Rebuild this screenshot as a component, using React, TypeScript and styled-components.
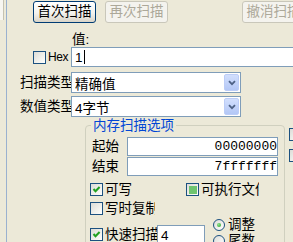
import React from "react";
import styled, { createGlobalStyle } from "styled-components";

const BG = "#ECE9D8";
const FIELD_BORDER = "#7F9DB9";
const CONTROL_BORDER = "#1C5180";

const GlobalStyle = createGlobalStyle`
  html, body {
    margin: 0;
    padding: 0;
    background: ${BG};
    overflow: hidden;
  }
  body {
    font-family: "Liberation Sans", "Noto Sans CJK SC", sans-serif;
    font-size: 13.5px;
    color: #000;
  }
`;

const Window = styled.div`
  display: flex;
  width: 330px;
  height: 242px;
  overflow: hidden;
`;

const LeftRail = styled.div`
  flex: none;
  width: 6px;
`;

const RailTab = styled.div`
  width: 3px;
  height: 20px;
  background: #f7f6f1;
  border-right: 1px solid #c5c2b2;
`;

const Main = styled.div`
  flex: 1;
  display: flex;
  flex-direction: column;
  border-left: 1px solid #9ab1cf;
`;

const ButtonRow = styled.div`
  display: flex;
  margin-top: 1px;
  height: 22px;
`;

const Button = styled.div<{ $left: number; $disabled?: boolean }>`
  flex: none;
  box-sizing: border-box;
  width: 63px;
  height: 22px;
  margin-left: ${p => p.$left}px;
  border: 1px solid ${p => (p.$disabled ? "#C9C7BA" : "#003C74")};
  border-radius: 3px;
  background: ${p =>
    p.$disabled
      ? "#F4F3EE"
      : "linear-gradient(#FFFFFF, #F3F3EE 55%, #D9D4C8)"};
  color: ${p => (p.$disabled ? "#ACA899" : "#000")};
  text-align: center;
  line-height: 20px;
  white-space: nowrap;
`;

const ValueLabel = styled.div`
  margin: 9px 0 0 65px;
  height: 15px;
  line-height: 15px;
`;

const HexRow = styled.div`
  display: flex;
  align-items: center;
  height: 20px;
`;

const HexLabel = styled.span`
  box-sizing: border-box;
  width: 25px;
  padding-left: 2px;
  font-size: 12px;
  letter-spacing: -0.4px;
  line-height: 15px;
`;

const Field = styled.div<{ $width: number; $height?: number; $right?: boolean }>`
  flex: none;
  box-sizing: border-box;
  display: flex;
  align-items: center;
  justify-content: ${p => (p.$right ? "flex-end" : "flex-start")};
  width: ${p => p.$width}px;
  height: ${p => p.$height || 20}px;
  padding: ${p => (p.$right ? "0" : "0 3px")};
  border: 1px solid ${FIELD_BORDER};
  background: #fff;
  white-space: nowrap;
`;

const Caret = styled.span`
  display: inline-block;
  width: 1px;
  height: 14px;
  margin-left: 1px;
  background: #000;
`;

const ComboRow = styled.div<{ $top: number }>`
  display: flex;
  align-items: center;
  margin: ${p => p.$top}px 0 0 13px;
`;

const RowLabel = styled.span`
  flex: none;
  width: 51px;
  overflow: hidden;
  white-space: nowrap;
  line-height: 15px;
`;

const Combo = styled.div`
  flex: none;
  box-sizing: border-box;
  display: flex;
  align-items: center;
  width: 170px;
  height: 21px;
  padding-left: 3px;
  border: 1px solid ${FIELD_BORDER};
  background: #fff;
`;

const ComboText = styled.span`
  flex: 1;
  white-space: nowrap;
`;

const DropButton = styled.span`
  flex: none;
  display: flex;
  align-items: center;
  justify-content: center;
  box-sizing: border-box;
  width: 15px;
  height: 17px;
  margin-right: 1px;
  border: 1px solid #bccdf7;
  border-radius: 2px;
  background: linear-gradient(#d2dffd, #b3c7f6);
`;

const GroupRow = styled.div`
  display: flex;
  margin: 8px 0 0 78px;
`;

const GroupBox = styled.div`
  flex: none;
  box-sizing: border-box;
  display: flex;
  flex-direction: column;
  width: 200px;
  height: 140px;
  border: 1px solid #d0d0bf;
  border-radius: 4px;
`;

const GroupTitle = styled.span`
  align-self: flex-start;
  margin: -8px 0 0 5px;
  padding: 0 2px;
  background: ${BG};
  color: #0046d5;
  line-height: 15px;
`;

const RangeRow = styled.div<{ $top: number }>`
  display: flex;
  align-items: center;
  margin: ${p => p.$top}px 0 0 6px;
`;

const RangeLabel = styled.span`
  width: 35px;
  line-height: 15px;
`;

const HexValue = styled.span`
  font-family: "Liberation Mono", monospace;
  font-size: 13px;
`;

const CheckRow = styled.div<{ $top: number }>`
  display: flex;
  align-items: flex-start;
  margin: ${p => p.$top}px 0 0 4px;
`;

const CheckItem = styled.div<{ $width?: number }>`
  flex: none;
  display: flex;
  align-items: center;
  width: ${p => (p.$width ? `${p.$width}px` : "auto")};
`;

const CheckText = styled.span<{ $width?: number; $top?: number }>`
  flex: none;
  margin: ${p => p.$top || 0}px 0 0 2px;
  width: ${p => (p.$width ? `${p.$width}px` : "auto")};
  overflow: hidden;
  white-space: nowrap;
  line-height: 15px;
`;

const Box = styled.span<{ $top?: number }>`
  flex: none;
  display: inline-flex;
  align-items: center;
  justify-content: center;
  box-sizing: border-box;
  width: 13px;
  height: 13px;
  margin-top: ${p => p.$top || 0}px;
  border: 1px solid ${CONTROL_BORDER};
  background: linear-gradient(135deg, #dcdcd7 0%, #f3f3ef 65%, #ffffff 100%);
`;

const MixedMark = styled.span`
  width: 8px;
  height: 8px;
  background: #6fc56f;
`;

const FieldSpacer = styled.div<{ $top: number }>`
  margin-top: ${p => p.$top}px;
`;

const RadioGroup = styled.div`
  display: flex;
  flex-direction: column;
  gap: 1px;
  margin-left: 8px;
`;

const RadioItem = styled.div`
  display: flex;
  align-items: center;
  height: 15px;
  gap: 3px;
  line-height: 15px;
`;

const Radio = styled.span<{ $on?: boolean }>`
  flex: none;
  display: inline-flex;
  align-items: center;
  justify-content: center;
  box-sizing: border-box;
  width: 12px;
  height: 12px;
  border: 1px solid ${CONTROL_BORDER};
  border-radius: 50%;
  background: linear-gradient(135deg, #dcdcd7, #ffffff);
  &::after {
    content: "";
    display: ${p => (p.$on ? "block" : "none")};
    width: 4px;
    height: 4px;
    border-radius: 50%;
    background: radial-gradient(circle at 35% 35%, #8ee08e, #23a023);
  }
`;

const SideChecks = styled.div`
  display: flex;
  flex-direction: column;
  gap: 8px;
  margin: 3px 0 0 4px;
`;

type CheckState = "on" | "off" | "mixed";

const Checkbox: React.FC<{ state?: CheckState; top?: number }> = ({ state = "off", top }) => (
  <Box $top={top}>
    {state === "on" && (
      <svg width="11" height="11" viewBox="0 0 11 11">
        <path d="M2.5 5 L4.5 7.2 L8.6 3" fill="none" stroke="#21A121" strokeWidth="2" />
      </svg>
    )}
    {state === "mixed" && <MixedMark />}
  </Box>
);

const Chevron: React.FC = () => (
  <svg width="8" height="6" viewBox="0 0 8 6">
    <path d="M1 1.2 L4 4.2 L7 1.2" fill="none" stroke="#4D6185" strokeWidth="1.8" />
  </svg>
);

const App: React.FC = () => {
  return (
    <>
      <GlobalStyle />
      <Window>
        <LeftRail>
          <RailTab />
        </LeftRail>
        <Main>
          <ButtonRow>
            <Button $left={26}>首次扫描</Button>
            <Button $left={9} $disabled>再次扫描</Button>
            <Button $left={74} $disabled>撤消扫描</Button>
          </ButtonRow>

          <ValueLabel>值:</ValueLabel>

          <HexRow>
            <span style={{ width: 26 }} />
            <Checkbox />
            <HexLabel>Hex</HexLabel>
            <Field $width={240}>
              1<Caret />
            </Field>
          </HexRow>

          <ComboRow $top={5}>
            <RowLabel>扫描类型</RowLabel>
            <Combo>
              <ComboText>精确值</ComboText>
              <DropButton>
                <Chevron />
              </DropButton>
            </Combo>
          </ComboRow>

          <ComboRow $top={3}>
            <RowLabel>数值类型</RowLabel>
            <Combo>
              <ComboText>4字节</ComboText>
              <DropButton>
                <Chevron />
              </DropButton>
            </Combo>
          </ComboRow>

          <GroupRow>
            <GroupBox>
              <GroupTitle>内存扫描选项</GroupTitle>
              <RangeRow $top={4}>
                <RangeLabel>起始</RangeLabel>
                <Field $width={151} $height={19} $right>
                  <HexValue>00000000</HexValue>
                </Field>
              </RangeRow>
              <RangeRow $top={1}>
                <RangeLabel>结束</RangeLabel>
                <Field $width={151} $height={19} $right>
                  <HexValue>7fffffff</HexValue>
                </Field>
              </RangeRow>

              <CheckRow $top={6}>
                <CheckItem $width={96}>
                  <Checkbox state="on" />
                  <CheckText>可写</CheckText>
                </CheckItem>
                <CheckItem>
                  <Checkbox state="mixed" />
                  <CheckText $width={58}>可执行文件</CheckText>
                </CheckItem>
              </CheckRow>

              <CheckRow $top={4}>
                <CheckItem>
                  <Checkbox />
                  <CheckText $width={50}>写时复制</CheckText>
                </CheckItem>
              </CheckRow>

              <CheckRow $top={1}>
                <Checkbox state="on" top={11} />
                <CheckText $width={52} $top={10}>快速扫描</CheckText>
                <FieldSpacer $top={8}>
                  <Field $width={48}>4</Field>
                </FieldSpacer>
                <RadioGroup>
                  <RadioItem>
                    <Radio $on />
                    调整
                  </RadioItem>
                  <RadioItem>
                    <Radio />
                    尾数
                  </RadioItem>
                </RadioGroup>
              </CheckRow>
            </GroupBox>
            <SideChecks>
              <Checkbox />
              <Checkbox />
            </SideChecks>
          </GroupRow>
        </Main>
      </Window>
    </>
  );
};

export default App;
